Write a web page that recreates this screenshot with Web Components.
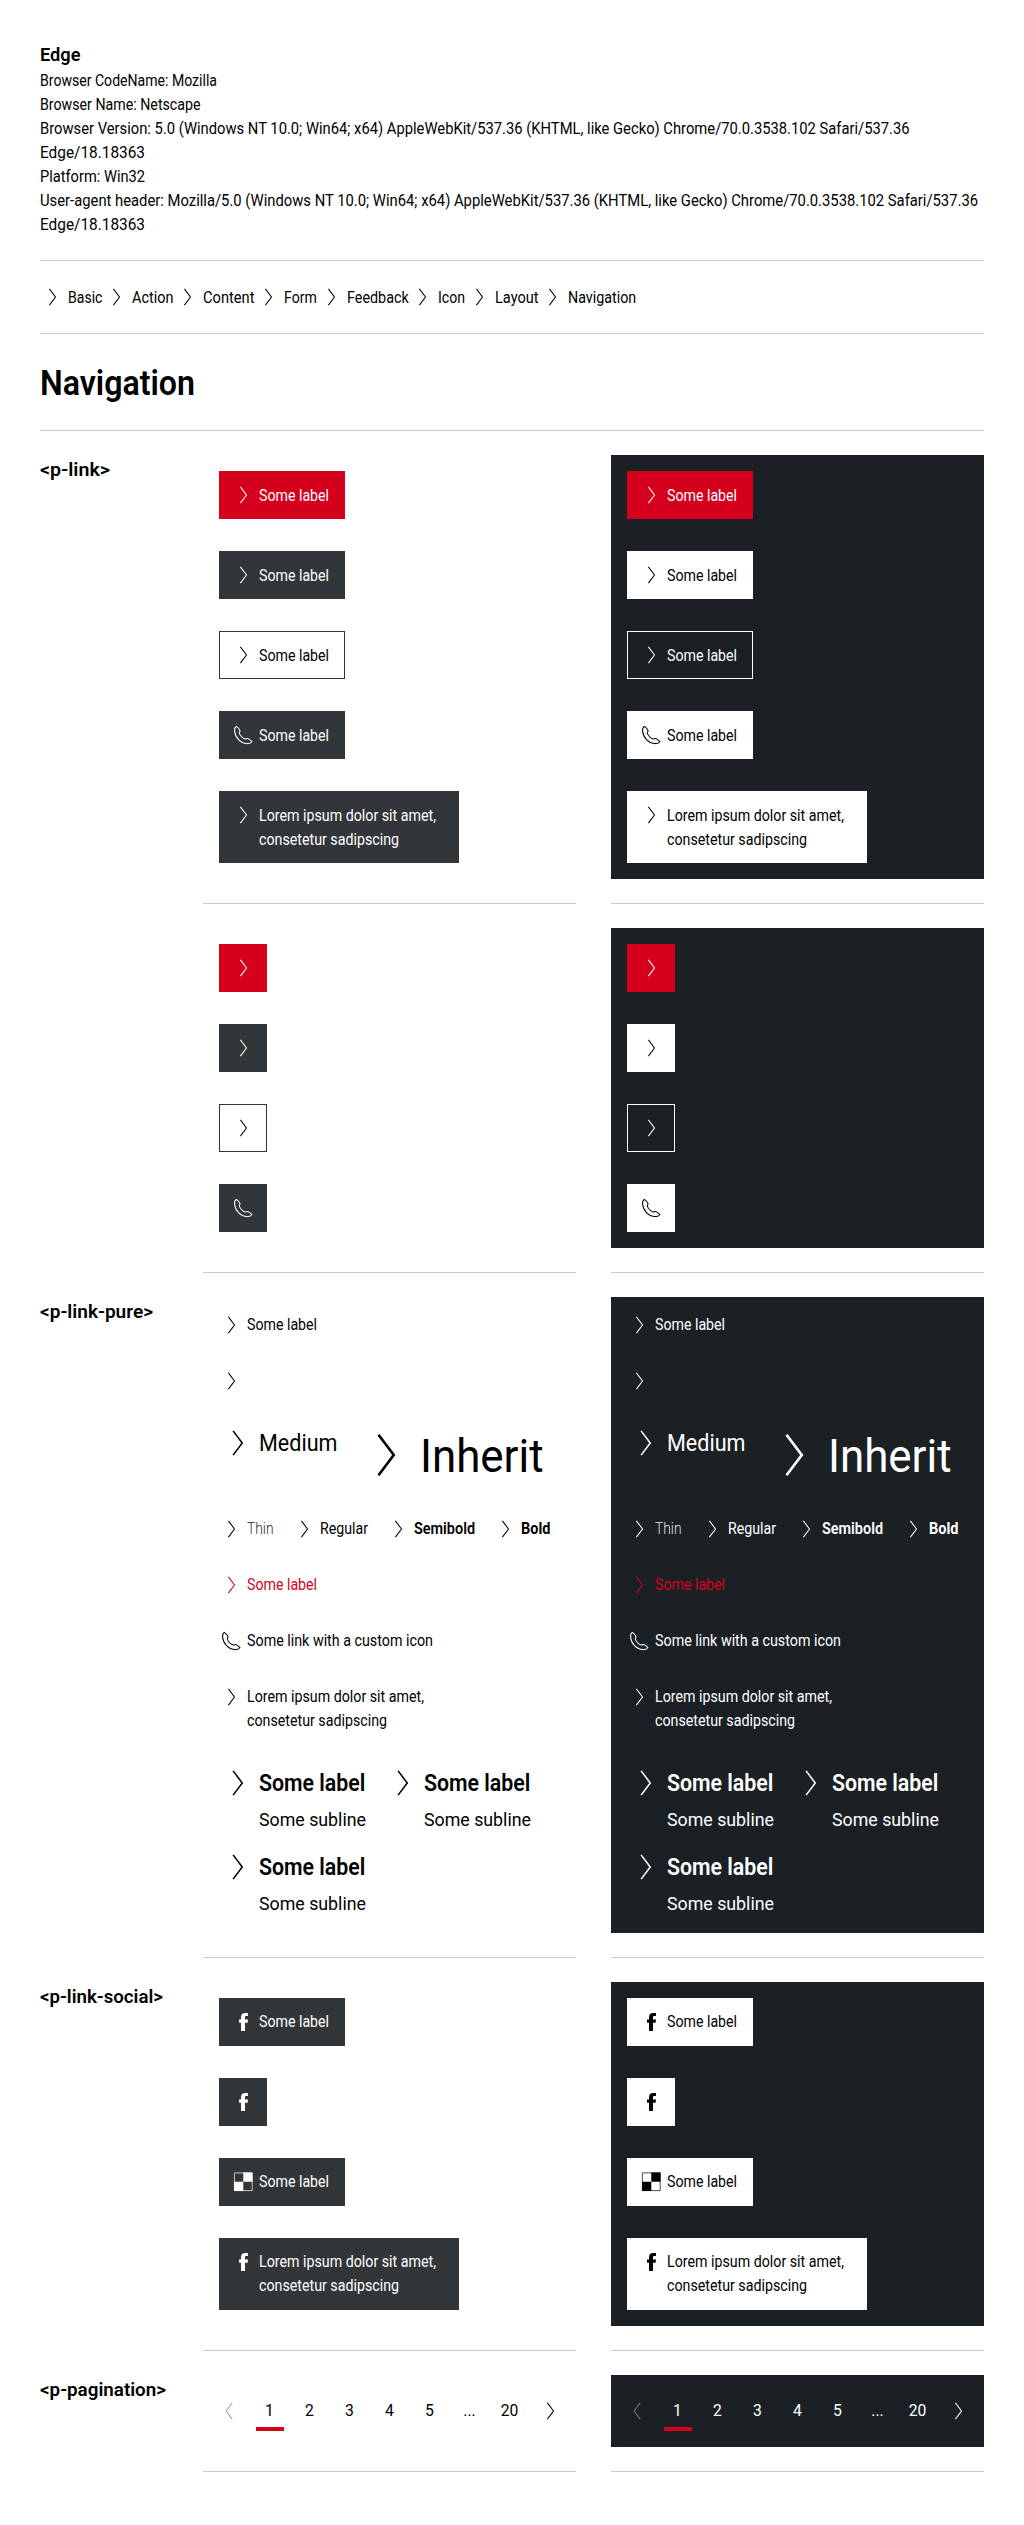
<!DOCTYPE html>
<html lang="en">
<head>
<meta charset="utf-8">
<title>Navigation</title>
<style>
body { margin: 0; background: #fff; color: #000; font: 15.7px/24px Roboto, "Liberation Sans", sans-serif; }
</style>
</head>
<body>
<page-shell>
  <browser-info>
    <fit-text slot="title" w="40.5">Edge</fit-text>
    <fit-text w="177">Browser CodeName: Mozilla</fit-text>
    <fit-text w="160.5">Browser Name: Netscape</fit-text>
    <fit-text w="869.5">Browser Version: 5.0 (Windows NT 10.0; Win64; x64) AppleWebKit/537.36 (KHTML, like Gecko) Chrome/70.0.3538.102 Safari/537.36</fit-text>
    <fit-text w="105">Edge/18.18363</fit-text>
    <fit-text w="105">Platform: Win32</fit-text>
    <fit-text w="938">User-agent header: Mozilla/5.0 (Windows NT 10.0; Win64; x64) AppleWebKit/537.36 (KHTML, like Gecko) Chrome/70.0.3538.102 Safari/537.36</fit-text>
    <fit-text w="105">Edge/18.18363</fit-text>
  </browser-info>
  <page-rule></page-rule>
  <link-row gap="1.7">
    <p-link-pure><fit-text w="34.4">Basic</fit-text></p-link-pure>
    <p-link-pure><fit-text w="41.4">Action</fit-text></p-link-pure>
    <p-link-pure><fit-text w="51.5">Content</fit-text></p-link-pure>
    <p-link-pure><fit-text w="32.8">Form</fit-text></p-link-pure>
    <p-link-pure><fit-text w="61.7">Feedback</fit-text></p-link-pure>
    <p-link-pure><fit-text w="27.1">Icon</fit-text></p-link-pure>
    <p-link-pure><fit-text w="43.5">Layout</fit-text></p-link-pure>
    <p-link-pure><fit-text w="68.2">Navigation</fit-text></p-link-pure>
  </link-row>
  <page-rule></page-rule>
  <page-title><fit-text w="155">Navigation</fit-text></page-title>
  <page-rule></page-rule>

  <demo-row>
    <fit-text slot="label" w="70">&lt;p-link&gt;</fit-text>
    <template>
      <p-link variant="primary"><fit-text w="70">Some label</fit-text></p-link>
      <p-link><fit-text w="70">Some label</fit-text></p-link>
      <p-link variant="tertiary"><fit-text w="70">Some label</fit-text></p-link>
      <p-link icon="phone"><fit-text w="70">Some label</fit-text></p-link>
      <p-link wide><fit-text w="177">Lorem ipsum dolor sit amet,</fit-text><fit-text w="140">consetetur sadipscing</fit-text></p-link>
    </template>
  </demo-row>
  <demo-row>
    <template>
      <p-link compact variant="primary"></p-link>
      <p-link compact></p-link>
      <p-link compact variant="tertiary"></p-link>
      <p-link compact icon="phone"></p-link>
    </template>
  </demo-row>
  <demo-row raised>
    <fit-text slot="label" w="113">&lt;p-link-pure&gt;</fit-text>
    <template>
      <p-link-pure><fit-text w="70">Some label</fit-text></p-link-pure>
      <p-link-pure></p-link-pure>
      <link-row gap="17.5">
        <p-link-pure size="medium"><fit-text w="78.5">Medium</fit-text></p-link-pure>
        <p-link-pure size="inherit"><fit-text w="123.5">Inherit</fit-text></p-link-pure>
      </link-row>
      <link-row gap="18.2">
        <p-link-pure weight="thin"><fit-text w="26.6">Thin</fit-text></p-link-pure>
        <p-link-pure><fit-text w="48">Regular</fit-text></p-link-pure>
        <p-link-pure weight="semibold"><fit-text w="61">Semibold</fit-text></p-link-pure>
        <p-link-pure weight="bold"><fit-text w="29.4">Bold</fit-text></p-link-pure>
      </link-row>
      <p-link-pure active><fit-text w="70">Some label</fit-text></p-link-pure>
      <p-link-pure icon="phone"><fit-text w="186">Some link with a custom icon</fit-text></p-link-pure>
      <p-link-pure><fit-text w="177">Lorem ipsum dolor sit amet,</fit-text><fit-text w="140">consetetur sadipscing</fit-text></p-link-pure>
      <link-row gap="18" wrap>
        <p-link-pure size="medium" weight="semibold"><fit-text w="106.3">Some label</fit-text><fit-text slot="subline" w="107">Some subline</fit-text></p-link-pure>
        <p-link-pure size="medium" weight="semibold"><fit-text w="106.3">Some label</fit-text><fit-text slot="subline" w="107">Some subline</fit-text></p-link-pure>
        <p-link-pure size="medium" weight="semibold"><fit-text w="106.3">Some label</fit-text><fit-text slot="subline" w="107">Some subline</fit-text></p-link-pure>
      </link-row>
    </template>
  </demo-row>
  <demo-row raised>
    <fit-text slot="label" w="123">&lt;p-link-social&gt;</fit-text>
    <template>
      <p-link icon="facebook"><fit-text w="70">Some label</fit-text></p-link>
      <p-link compact icon="facebook"></p-link>
      <p-link icon="delicious"><fit-text w="70">Some label</fit-text></p-link>
      <p-link wide icon="facebook"><fit-text w="177">Lorem ipsum dolor sit amet,</fit-text><fit-text w="140">consetetur sadipscing</fit-text></p-link>
    </template>
  </demo-row>
  <demo-row>
    <fit-text slot="label" w="126">&lt;p-pagination&gt;</fit-text>
    <template><p-pagination pages="1,2,3,4,5,...,20" current="1"></p-pagination></template>
  </demo-row>
</page-shell>

<script>
function define(name, render, setup) {
  customElements.define(name, class extends HTMLElement {
    connectedCallback() {
      if (this.shadowRoot) return;
      this.attachShadow({ mode: 'open' }).innerHTML = render(this);
      if (setup) setup(this, this.shadowRoot);
    }
  });
}

const ICONS = {
  'arrow-right': '<path d="M9.4 3.9 15.5 12 9.4 20.1" fill="none" stroke="currentColor" stroke-width="1.05"/>',
  'arrow-left': '<path d="M14.2 3.9 8.1 12 14.2 20.1" fill="none" stroke="currentColor" stroke-width="1.05"/>',
  phone: '<path d="M5.4 3.4C3.9 4 3.4 5.6 3.6 8C4 14.4 9.5 20.2 16 20.6C18.4 20.7 20.2 19.9 20.9 18.4C19.5 17.2 18.2 16 16.8 15.5C15.6 15.2 15.3 16.3 14.1 16C12 15.2 9.2 12.3 8.3 10.1C8 8.9 9.4 8.6 9 7.4C8.3 6 6.8 4.4 5.4 3.4Z" fill="none" stroke="currentColor" stroke-width="1.05"/>',
  facebook: '<path d="M10 21v-8.3H8V9.5h2V7.2C10 4.4 11.5 2.9 14.2 2.9H17v3.2h-1.6c-1.1 0-1.4.5-1.4 1.4v2h3l-.4 3.2H14V21z" fill="currentColor"/>',
  delicious: '<path d="M3.4 2.9h17.8v17.7H3.4z" fill="none" stroke="currentColor" stroke-width=".7"/><path d="M12.3 2.6h9.2v9.2h-9.2zM3.1 11.8h9.2v9.2H3.1z" fill="currentColor"/>'
};

define('page-shell', () => `<style>
  :host { display: flex; flex-direction: column; gap: 24px; padding: 40px 40px 53px; }
</style><slot></slot>`);

define('page-rule', () => `<style>:host { display: block; height: 1px; background: #c9cacb; }</style>`);

define('browser-info', () => `<style>
  :host { display: block; }
  .title { font-size: 19.2px; line-height: 28px; font-weight: 600; --dy: .5px; }
</style><div class="title"><slot name="title"></slot></div><slot></slot>`);

define('page-title', () => `<style>
  :host { display: block; font-size: 34.5px; line-height: 48px; font-weight: 600; --dy: .7px; }
</style><slot></slot>`);

define('p-icon', el => `<style>
  :host { display: block; flex: none; width: 24px; height: 24px; }
  svg { display: block; width: 100%; height: 100%; }
</style><svg viewBox="0 0 24 24" aria-hidden="true">${ICONS[el.getAttribute('name')]}</svg>`);

define('link-row', el => `<style>
  :host { display: flex; align-items: flex-start; column-gap: ${el.getAttribute('gap')}px; row-gap: 16px; }
  :host([wrap]) { flex-wrap: wrap; }
</style><slot></slot>`);

define('p-link', el => `<style>
  :host { display: block; }
  a {
    display: inline-flex; box-sizing: border-box; vertical-align: top; gap: 4px;
    padding: 11px 15px 11px 11px; border: 1px solid var(--btn-bg, #323639);
    background: var(--btn-bg, #323639); color: var(--btn-fg, #fff);
  }
  :host([wide]) a { width: 240px; }
  :host([compact]) a { padding: 11px; }
  :host([variant=primary]) a { background: #d5001c; border-color: #d5001c; color: #fff; }
  :host([variant=tertiary]) a { background: transparent; color: var(--ghost-fg, #000); }
  :host([compact]) .text { display: none; }
</style><a><p-icon name="${el.getAttribute('icon') || 'arrow-right'}"></p-icon><span class="text"><slot></slot></span></a>`);

define('p-link-pure', el => `<style>
  :host { display: block; --icon: 24px; }
  a { display: flex; gap: 4px; }
  p-icon { width: var(--icon); height: var(--icon); }
  :host([size=medium]) { --icon: 36px; --dy: 1px; font-size: 23px; line-height: 36px; }
  :host([size=inherit]) { --icon: 60px; --dy: .5px; font-size: 46px; line-height: 60px; }
  :host([size=inherit]) .text { padding-left: 1px; }
  :host([weight=thin]) { font-weight: 300; }
  :host([weight=thin]) .text { opacity: .85; }
  :host([weight=semibold]) { font-weight: 600; }
  :host([weight=bold]) { font-weight: 700; }
  :host([active]) { color: #d5001c; }
  .sub { display: block; font-size: 19.2px; line-height: 28px; font-weight: 400; }
  .sub.shown { padding-top: 4px; }
</style><a><p-icon name="${el.getAttribute('icon') || 'arrow-right'}"></p-icon><span class="text"><slot></slot><span class="sub${el.querySelector('[slot=subline]') ? ' shown' : ''}"><slot name="subline"></slot></span></span></a>`);

define('p-pagination', el => {
  const current = el.getAttribute('current');
  const pages = el.getAttribute('pages').split(',').map(p =>
    `<li class="${p === current ? 'current' : ''}"><span>${p}</span></li>`).join('');
  return `<style>
    :host { display: block; margin: 0 -16px; }
    ul { display: flex; justify-content: center; gap: 8px; margin: 0; padding: 0; list-style: none; }
    li { display: flex; flex-direction: column; align-items: center; box-sizing: border-box; width: 32px; height: 40px; padding-top: 8px; }
    .current::after { content: ""; width: 28px; height: 4px; margin-top: 4px; background: #d5001c; }
    .off { color: var(--disabled, #a2a4a6); }
  </style><ul><li class="off"><p-icon name="arrow-left"></p-icon></li>${pages}<li><p-icon name="arrow-right"></p-icon></li></ul>`;
});

define('demo-row', () => `<style>
  :host { display: flex; justify-content: space-between; align-items: flex-start; }
  :host([raised]) .panel { --dy: 0px; }
  .label { width: 128px; font-size: 19.2px; line-height: 28px; font-weight: 600; --dy: .5px; }
  .col { display: flex; flex-direction: column; gap: 24px; width: 373px; }
  .panel { display: flex; flex-direction: column; gap: 32px; padding: 16px; }
  .dark {
    background: #1b2024; color: #fff;
    --btn-bg: #fff; --btn-fg: #000; --ghost-fg: #fff; --disabled: #707376;
  }
</style>
<div class="label"><slot name="label"></slot></div>
<div class="col"><div class="panel light"></div><page-rule></page-rule></div>
<div class="col"><div class="panel dark"></div><page-rule></page-rule></div>`, (el, root) => {
  const source = el.querySelector('template');
  for (const panel of root.querySelectorAll('.panel')) {
    panel.append(document.importNode(source.content, true));
  }
});

/* One line of text, condensed horizontally to the given advance width. */
define('fit-text', el => `<style>
  :host { display: block; width: ${el.getAttribute('w')}px; white-space: nowrap; }
  span { display: inline-block; vertical-align: top; transform-origin: 0 0; }
</style><span><slot></slot></span>`, (el, root) => {
  const span = root.querySelector('span');
  const scale = parseFloat(el.getAttribute('w')) / span.getBoundingClientRect().width;
  span.style.transform = `translateY(var(--dy, 1px)) scaleX(${scale.toFixed(4)})`;
});
</script>
</body>
</html>
